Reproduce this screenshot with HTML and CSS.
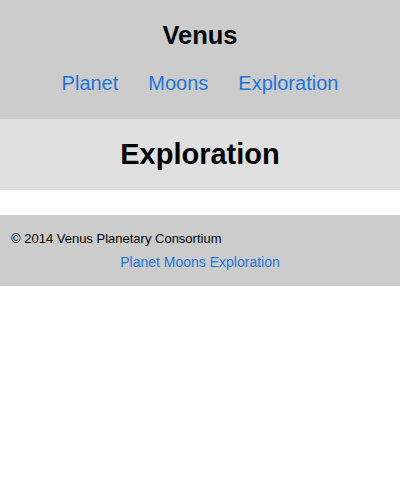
FILE: index.html
```html
<!DOCTYPE html>
<html lang="en">
<head>
<meta charset="utf-8">
<title>Venus</title>
<link rel="stylesheet" href="styles.css">
</head>
<body>
<header class="site-header">
  <h1 class="site-title">Venus</h1>
  <nav class="main-nav">
    <a href="#" class="nav-link">Planet</a>
    <a href="#" class="nav-link">Moons</a>
    <a href="#" class="nav-link">Exploration</a>
  </nav>
</header>
<section class="page-banner">
  <h2 class="page-title">Exploration</h2>
</section>
<footer class="site-footer">
  <p class="copyright">© 2014 Venus Planetary Consortium</p>
  <nav class="footer-nav">
    <a href="#" class="footer-link">Planet</a> <a href="#" class="footer-link">Moons</a> <a href="#" class="footer-link">Exploration</a>
  </nav>
</footer>
</body>
</html>
```
FILE: styles.css
```css
html, body {
  margin: 0;
  padding: 0;
  background: #ffffff;
  font-family: "Liberation Sans", Arial, Helvetica, sans-serif;
  color: #000000;
}

.site-header {
  background: #cccccc;
  padding: 20px 0 24px;
  display: flex;
  flex-direction: column;
  align-items: center;
  gap: 21px;
}

.site-title {
  margin: 0;
  font-size: 25.5px;
  line-height: 30px;
  font-weight: bold;
}

.main-nav {
  display: flex;
  gap: 30px;
}

.nav-link {
  font-size: 20px;
  line-height: 24px;
  color: #1f74d8;
  text-decoration: none;
}

.page-banner {
  background: #e0e0e0;
  padding: 18px 0 19px;
  text-align: center;
}

.page-title {
  margin: 0;
  font-size: 29px;
  line-height: 34px;
  font-weight: bold;
}

.site-footer {
  margin-top: 25px;
  background: #cccccc;
  padding: 16px 11px 16px;
}

.copyright {
  margin: 0;
  font-size: 13px;
  line-height: 16px;
}

.footer-nav {
  margin-top: 7px;
  text-align: center;
  font-size: 14px;
  line-height: 16px;
}

.footer-link {
  color: #1f74d8;
  text-decoration: none;
}
```
